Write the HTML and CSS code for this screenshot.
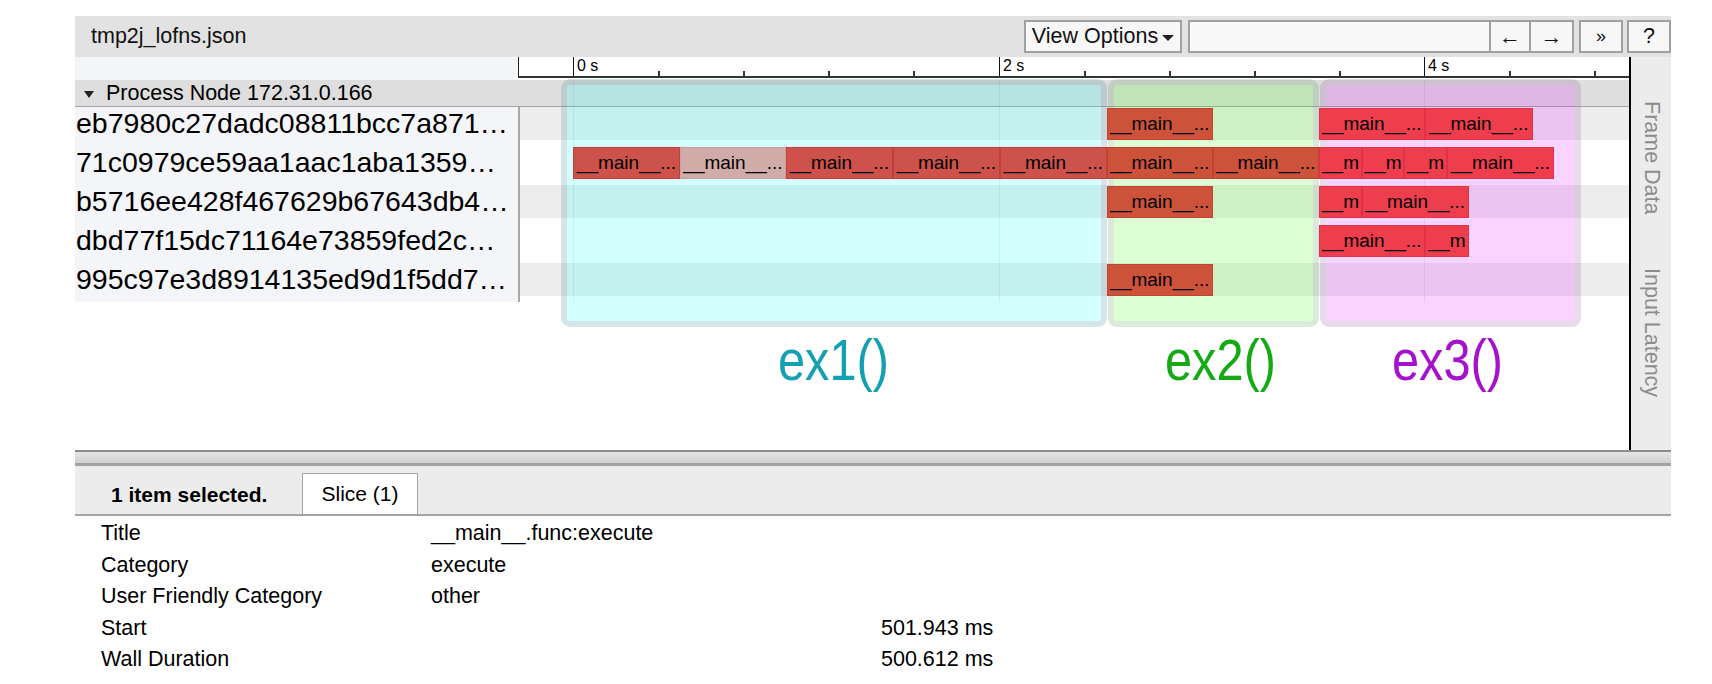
FILE: index.html
```html
<!DOCTYPE html>
<html>
<head>
<meta charset="utf-8">
<title>tmp2j_lofns.json</title>
<link rel="stylesheet" href="styles.css">
</head>
<body>
<div class="app">
  <div class="topbar">
    <div class="title">tmp2j_lofns.json</div>
    <div class="controls">
      <div class="btn view">View Options<span class="caret"></span></div>
      <div class="search"></div>
      <div class="btn arrow left">&larr;</div>
      <div class="btn arrow right">&rarr;</div>
      <div class="btn more">&raquo;</div>
      <div class="btn help">?</div>
    </div>
  </div>

  <div class="main">
    <div class="timeline">
      <div class="ruler-row">
        <div class="lcol"></div>
        <div class="ruler">
          <div class="major" style="left:54px"><span>0 s</span></div>
          <div class="minor" style="left:139px"></div>
          <div class="minor" style="left:224px"></div>
          <div class="minor" style="left:309px"></div>
          <div class="minor" style="left:394px"></div>
          <div class="major" style="left:480px"><span>2 s</span></div>
          <div class="minor" style="left:565px"></div>
          <div class="minor" style="left:650px"></div>
          <div class="minor" style="left:735px"></div>
          <div class="minor" style="left:820px"></div>
          <div class="major" style="left:905px"><span>4 s</span></div>
          <div class="minor" style="left:990px"></div>
          <div class="minor" style="left:1075px"></div>
        </div>
      </div>

      <div class="phead"><span class="tri"></span>Process Node 172.31.0.166</div>

      <div class="track">
        <div class="tlabel">eb7980c27dadc08811bcc7a871…</div>
        <div class="tarea alt">
          <div class="s c2" style="left:587px;width:106px">__main__...</div>
          <div class="s c3" style="left:799px;width:106px">__main__...</div>
          <div class="s c3" style="left:905px;width:108px">__main__...</div>
        </div>
      </div>
      <div class="track">
        <div class="tlabel">71c0979ce59aa1aac1aba1359…</div>
        <div class="tarea">
          <div class="s c1" style="left:53px;width:107px">__main__...</div>
          <div class="s cp" style="left:160px;width:106px">__main__...</div>
          <div class="s c1" style="left:266px;width:107px">__main__...</div>
          <div class="s c1" style="left:373px;width:107px">__main__...</div>
          <div class="s c1" style="left:480px;width:107px">__main__...</div>
          <div class="s c2" style="left:587px;width:106px">__main__...</div>
          <div class="s c2" style="left:693px;width:106px">__main__...</div>
          <div class="s c3" style="left:799px;width:43px">__m</div>
          <div class="s c3" style="left:842px;width:42px">__m</div>
          <div class="s c3" style="left:884px;width:43px">__m</div>
          <div class="s c3" style="left:927px;width:107px">__main__...</div>
        </div>
      </div>
      <div class="track">
        <div class="tlabel">b5716ee428f467629b67643db4…</div>
        <div class="tarea alt">
          <div class="s c2" style="left:587px;width:106px">__main__...</div>
          <div class="s c3" style="left:799px;width:43px">__m</div>
          <div class="s c3" style="left:842px;width:107px">__main__...</div>
        </div>
      </div>
      <div class="track">
        <div class="tlabel">dbd77f15dc71164e73859fed2c…</div>
        <div class="tarea">
          <div class="s c3" style="left:799px;width:106px">__main__...</div>
          <div class="s c3" style="left:905px;width:44px">__m</div>
        </div>
      </div>
      <div class="track">
        <div class="tlabel">995c97e3d8914135ed9d1f5dd7…</div>
        <div class="tarea alt">
          <div class="s c2" style="left:587px;width:106px">__main__...</div>
        </div>
      </div>

      <div class="gridline" style="left:498px"></div>
      <div class="gridline" style="left:924px"></div>
      <div class="gridline" style="left:1349px"></div>

      <div class="ov ov1" style="left:486px;width:546px"></div>
      <div class="ov ov2" style="left:1033px;width:211px"></div>
      <div class="ov ov3" style="left:1245px;width:261px"></div>

      <div class="ann a1" style="left:703px">ex1()</div>
      <div class="ann a2" style="left:1090px">ex2()</div>
      <div class="ann a3" style="left:1317px">ex3()</div>
    </div>
    <div class="side">
      <span>Frame Data</span>
      <span>Input Latency</span>
    </div>
  </div>

  <div class="splitter"></div>

  <div class="analysis">
    <div class="tabbar">
      <div class="sel">1 item selected.</div>
      <div class="tab">Slice (1)</div>
    </div>
    <div class="props">
      <div>Title</div><div>__main__.func:execute</div><div></div>
      <div>Category</div><div>execute</div><div></div>
      <div>User Friendly Category</div><div>other</div><div></div>
      <div>Start</div><div></div><div>501.943 ms</div>
      <div>Wall Duration</div><div></div><div>500.612 ms</div>
      <div class="last">Self Time</div><div></div><div></div>
    </div>
  </div>
</div>
</body>
</html>
```

FILE: styles.css
```css
* { box-sizing: border-box; }
html, body { margin: 0; padding: 0; background: #fff; overflow: hidden; }
body {
  width: 1712px;
  height: 684px;
  font-family: "Liberation Sans", Arial, Helvetica, sans-serif;
  color: #000;
}
.app { margin: 16px 0 0 75px; width: 1596px; }

/* top bar */
.topbar {
  height: 41px;
  background: #e2e2e2;
  display: flex;
  align-items: center;
  justify-content: space-between;
}
.title { padding-left: 16px; font-size: 21.5px; color: #111; }
.controls { display: flex; align-items: center; }
.btn {
  height: 33px;
  border: 2px solid #a0a0a0;
  background: #f7f7f7;
  display: flex;
  align-items: center;
  justify-content: center;
  font-size: 21.5px;
  color: #111;
}
.view { width: 158px; margin-right: 6px; }
.caret {
  display: inline-block;
  width: 0; height: 0;
  margin-left: 4px;
  margin-top: 3px;
  border-left: 6px solid transparent;
  border-right: 6px solid transparent;
  border-top: 6px solid #222;
}
.search { width: 301px; height: 33px; background: #f9f9f9; border: 2px solid #a0a0a0; border-right: none; }
.arrow { width: 42px; font-size: 22px; }
.arrow.right { width: 43px; border-left: none; }
.more { width: 44px; margin-left: 5px; font-size: 18px; }
.help { width: 44px; margin-left: 4px; }

/* main area */
.main { display: flex; height: 393px; }
.timeline { position: relative; width: 1554px; background: #fff; overflow: hidden; }
.side {
  width: 42px;
  border-left: 2px solid #000;
  background: #ececec;
  display: flex;
  flex-direction: column;
  align-items: center;
  padding-top: 44px;
  gap: 53px;
}
.side span { writing-mode: vertical-rl; font-size: 21.5px; color: #8c8c8c; }

.ruler-row { display: flex; height: 23px; }
.lcol { width: 443px; background: #f4f5f8; }
.ruler {
  position: relative;
  flex: 1;
  height: 21px;
  border-left: 1px solid #222;
  border-bottom: 2px solid #333;
}
.major { position: absolute; top: 0; bottom: 0; width: 1px; background: #111; }
.major span { position: absolute; left: 4px; top: 1px; font-size: 16px; line-height: 16px; white-space: nowrap; }
.minor { position: absolute; bottom: 0; height: 5px; width: 2px; background: #333; }

.phead {
  height: 27px;
  background: #dedede;
  border-bottom: 1px solid #a3a3a3;
  display: flex;
  align-items: center;
  padding-left: 9px;
  font-size: 21.5px;
}
.tri {
  width: 0; height: 0;
  margin-right: 12px;
  margin-top: 2px;
  border-left: 5.5px solid transparent;
  border-right: 5.5px solid transparent;
  border-top: 7px solid #222;
}

.track { display: flex; height: 39px; }
.tlabel {
  width: 445px;
  background: #f4f5f8;
  border-right: 2px solid #a8a8a8;
  font-size: 28.5px;
  line-height: 33px;
  white-space: nowrap;
  overflow: hidden;
  padding-left: 1px;
}
.tarea { flex: 1; position: relative; }
.tarea.alt::before {
  content: "";
  position: absolute;
  left: 0; right: 0; top: 0;
  height: 33px;
  background: #ededed;
}
.s {
  position: absolute;
  top: 1px;
  height: 32px;
  border: 1px solid;
  font-size: 19px;
  line-height: 30px;
  text-align: center;
  white-space: nowrap;
  overflow: hidden;
  z-index: 3;
}
.c1 { background: #cd524b; border-color: #c1413a; }
.cp { background: #d1aba7; border-color: #c9a29e; }
.c2 { background: #cc523a; border-color: #c0452f; }
.c3 { background: #ee3d4c; border-color: #df3148; }

.gridline { position: absolute; top: 23px; height: 222px; width: 1px; background: rgba(0, 0, 0, 0.07); z-index: 1; }

.ov {
  position: absolute;
  top: 22px;
  height: 248px;
  border: 6px solid;
  border-radius: 9px;
  background-clip: padding-box;
  z-index: 2;
}
.ov1 { background-color: rgba(0, 255, 255, 0.17); border-color: rgba(70, 140, 150, 0.22); }
.ov2 { background-color: rgba(40, 255, 0, 0.16); border-color: rgba(80, 150, 80, 0.2); }
.ov3 { background-color: rgba(220, 0, 255, 0.17); border-color: rgba(140, 80, 150, 0.2); }

.ann {
  position: absolute;
  top: 274px;
  font-size: 58px;
  line-height: 58px;
  white-space: nowrap;
  transform: scaleX(0.84);
  transform-origin: left center;
}
.a1 { color: #14a0b3; }
.a2 { color: #14aa14; }
.a3 { color: #a511cc; }

/* splitter */
.splitter {
  height: 16px;
  border-top: 2px solid #8c8c8c;
  border-bottom: 3px solid #a3a3a3;
  background: linear-gradient(#e6e6e6, #cfcfcf);
}

/* analysis panel */
.tabbar {
  height: 50px;
  background: #ececec;
  border-bottom: 2px solid #a4a4a4;
  display: flex;
  align-items: flex-end;
}
.sel {
  width: 227px;
  align-self: stretch;
  padding: 9px 0 0 36px;
  display: flex;
  align-items: center;
  font-weight: bold;
  font-size: 21px;
}
.tab {
  width: 116px;
  height: 41px;
  background: #fff;
  border: 1px solid #a4a4a4;
  border-bottom: none;
  display: flex;
  align-items: center;
  justify-content: center;
  font-size: 21px;
}
.props {
  display: grid;
  grid-template-columns: 330px 450px auto;
  padding: 2px 0 0 26px;
  font-size: 21.5px;
  line-height: 31.5px;
}
.props .last { padding-top: 3px; }
```
